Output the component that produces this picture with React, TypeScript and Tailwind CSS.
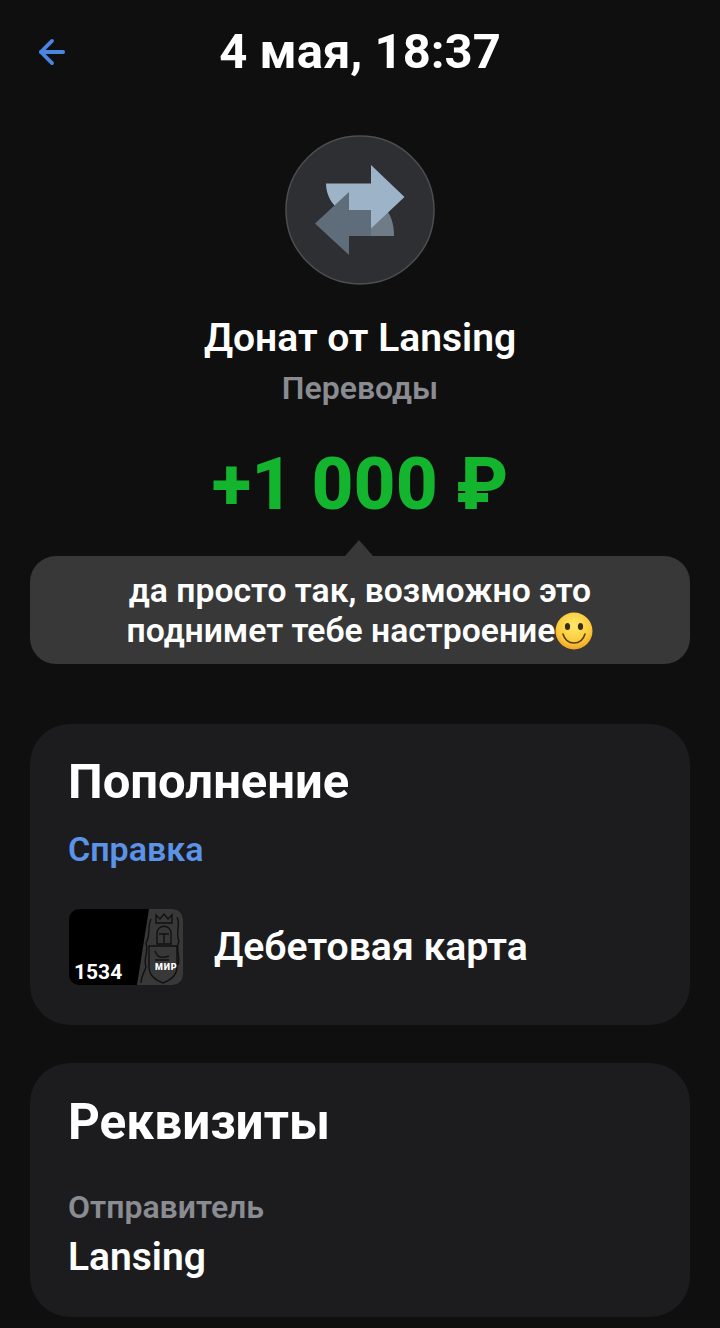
import { ArrowLeft } from 'lucide-react';

function TransferIcon() {
  return (
    <svg viewBox="0 0 150 150" className="w-[150px] h-[150px]">
      <circle cx="75" cy="75" r="74" fill="#2e2f33" stroke="#4d4e51" strokeWidth="1.5" />
      {/* tail of the left arrow runs under the right arrow, its head over it */}
      <path d="M80 75H101C106 80 109 89 109 101H80Z" fill="#6f7c88" />
      <path d="M41 48.5H86V30L119.5 62L86 93.5V75H55C47 70 41 60 41 48.5Z" fill="#9db4c8" />
      <path d="M64 57V75H86V101H64V120L30 88.5Z" fill="#5f6d7a" />
    </svg>
  );
}

function Smile() {
  return (
    <svg viewBox="0 0 38 38" className="w-[38px] h-[38px] inline-block align-[-8px]">
      <defs>
        <radialGradient id="face" cx="0.5" cy="0.35" r="0.7">
          <stop offset="0" stopColor="#fde96a" />
          <stop offset="0.65" stopColor="#fbc93a" />
          <stop offset="1" stopColor="#ee9a1e" />
        </radialGradient>
      </defs>
      <circle cx="19" cy="19" r="18.5" fill="url(#face)" />
      <ellipse cx="12.5" cy="14.5" rx="2.6" ry="3.6" fill="#3a2a1a" />
      <ellipse cx="25.5" cy="14.5" rx="2.6" ry="3.6" fill="#3a2a1a" />
      <path d="M8 22C10 29 15 31 19 31C23 31 28 29 30 22" fill="none" stroke="#5a3c14" strokeWidth="1.6" strokeLinecap="round" />
    </svg>
  );
}

function CardThumb() {
  return (
    <div className="relative ml-[1px] w-[114px] h-[76px] rounded-[10px] bg-black overflow-hidden">
      <svg viewBox="0 0 114 76" className="w-full h-full">
        <path d="M80 0H114V76H68Z" fill="#383838" />
        <g fill="none" stroke="#111111" strokeWidth="1.4">
          <path d="M87 6L91 10L95 5L99 10L103 6V14H87Z" />
          <path d="M88 24C88 15 102 15 102 24V35H88Z" />
          <path d="M90 25H100M95 25V34" />
          <path d="M80 37H108V58C108 67 100 72 94 74C88 72 80 67 80 58Z" />
          <path d="M86 42C88 48 92 50 100 47M86 51H100" />
          <path d="M82 10C78 18 82 26 77 34C80 42 74 50 77 58C75 64 72 68 72 74" />
          <path d="M108 8C112 16 106 24 110 32C106 40 112 48 109 56" />
        </g>
      </svg>
      <span className="absolute left-[5px] bottom-[0px] text-[21px] leading-[26px] font-bold text-white">1534</span>
      <span className="absolute left-[86px] bottom-[13px] text-[9px] leading-[10px] tracking-[0.8px] font-black text-white">МИР</span>
    </div>
  );
}

export default function App() {
  return (
    <div className="w-[720px] h-[1328px] overflow-hidden bg-[#0f0f10] text-white font-['Roboto',sans-serif]">
      <header className="relative h-[104px] flex items-center justify-center">
        <ArrowLeft className="absolute left-[33px] top-[33px] text-[#4a86e0]" size={38} strokeWidth={2.4} />
        <h1 className="text-[49px] leading-[54px] font-bold">4 мая, 18:37</h1>
      </header>

      <div className="flex flex-col items-center">
        <div className="mt-[31px]">
          <TransferIcon />
        </div>
        <div className="mt-[30px] text-[39px] leading-[46px] font-semibold">Донат от Lansing</div>
        <div className="mt-[9px] text-[32px] leading-[36px] font-semibold text-[#8a8c91]">Переводы</div>
        <div className="mt-[36px] text-[73px] leading-[84px] font-extrabold text-[#14b52e]">+1 000 ₽</div>
      </div>

      <div className="relative mx-[30px] mt-[30px] h-[108px] rounded-[26px] bg-[#383838] flex flex-col items-center justify-center pt-[1px] text-[33.7px] leading-[40px] font-semibold">
        <div className="absolute left-[315px] top-[-16px] w-0 h-0 border-x-[14px] border-x-transparent border-b-[16px] border-b-[#383838]" />
        <div>да просто так, возможно это</div>
        <div>
          поднимет тебе настроение
          <Smile />
        </div>
      </div>

      <section className="mx-[30px] mt-[60px] h-[301px] rounded-[40px] bg-[#1c1c1e] px-[38px] pt-[30px]">
        <h2 className="text-[49px] leading-[56px] font-bold">Пополнение</h2>
        <div className="mt-[20px] text-[34px] leading-[38px] font-semibold text-[#5b93e8]">Справка</div>
        <div className="mt-[41px] flex items-center gap-[31px]">
          <CardThumb />
          <span className="text-[39.2px] leading-[46px] font-semibold">Дебетовая карта</span>
        </div>
      </section>

      <section className="mx-[30px] mt-[38px] h-[254px] rounded-[40px] bg-[#1c1c1e] px-[38px] pt-[31px]">
        <h2 className="text-[49.5px] leading-[56px] font-bold">Реквизиты</h2>
        <div className="mt-[39px] text-[32px] leading-[36px] font-semibold text-[#8a8c91]">Отправитель</div>
        <div className="mt-[10px] text-[39px] leading-[44px] font-semibold">Lansing</div>
      </section>
    </div>
  );
}
